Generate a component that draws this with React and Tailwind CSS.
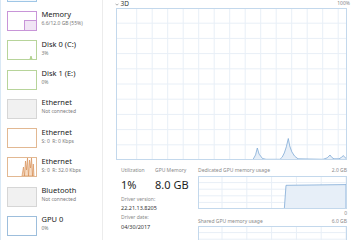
import React from "react";

const items = [
  { title: "", sub: "", kind: "cpu" },
  { title: "Memory", sub: "6.6/12.0 GB (55%)", kind: "mem" },
  { title: "Disk 0 (C:)", sub: "3%", kind: "disk0" },
  { title: "Disk 1 (E:)", sub: "0%", kind: "disk1" },
  { title: "Ethernet", sub: "Not connected", kind: "off" },
  { title: "Ethernet", sub: "S: 0  R: 0 Kbps", kind: "eth" },
  { title: "Ethernet", sub: "S: 0  R: 32.0 Kbps", kind: "eth2" },
  { title: "Bluetooth", sub: "Not connected", kind: "off" },
  { title: "GPU 0", sub: "0%", kind: "gpu" },
];

function Thumb({ kind }) {
  if (kind === "cpu")
    return <div className="w-[30px] h-[20px] border border-[#9fc6e6] bg-[#f4f9fd]" />;
  if (kind === "mem")
    return (
      <div className="w-[30px] h-[20px] border border-[#c895d8] bg-white">
        <svg width="28" height="18" className="block">
          <rect x="16.5" y="8.5" width="12" height="10" fill="#f1e5f5" stroke="#c895d8" strokeWidth="1" />
        </svg>
      </div>
    );
  if (kind === "disk0" || kind === "disk1")
    return (
      <div className="w-[30px] h-[20px] border border-[#b7d49a] bg-white">
        {kind === "disk0" && (
          <svg width="28" height="18" className="block">
            <path d="M22,18 L23,15 L24,18 Z" fill="#dcebc9" stroke="#9cc46f" strokeWidth="0.7" />
          </svg>
        )}
      </div>
    );
  if (kind === "off")
    return <div className="w-[30px] h-[20px] border border-[#d6d6d6] bg-[#f1f1f1]" />;
  if (kind === "eth")
    return <div className="w-[30px] h-[20px] border border-[#e2b892] bg-white" />;
  if (kind === "eth2")
    return (
      <div className="w-[30px] h-[20px] border border-[#e2b892] bg-white">
        <svg width="28" height="18" className="block">
          <path
            d="M14,18 L15.5,9 L16.5,18 L17.5,3 L18.5,12 L19.5,0 L20.5,18 L21.5,2 L22.5,10 L23.5,0 L24.5,18 L25.3,6 L26,18 Z"
            fill="#f6dcc4"
            stroke="#d8925a"
            strokeWidth="0.7"
          />
        </svg>
      </div>
    );
  return <div className="w-[30px] h-[20px] border border-[#9dbedc] bg-white" />;
}

function MainChart() {
  const vx = [];
  for (let x = 20.7; x < 231; x += 15.5) vx.push(x);
  const hy = [];
  for (let y = 15.2; y < 152; y += 15.2) hy.push(y);
  return (
    <svg width="231" height="152" className="block">
      {vx.map((x, i) => (
        <line key={"v" + i} x1={x} y1="0" x2={x} y2="152" stroke="#e8eff7" strokeWidth="1" />
      ))}
      {hy.map((y, i) => (
        <line key={"h" + i} x1="0" y1={y} x2="231" y2={y} stroke="#e8eff7" strokeWidth="1" />
      ))}
      <path
        d="M137,151.5 Q140,148 141.3,140 Q142.3,147 146.5,150.5 L150,151.3 L164,151.3 Q168.5,149 172.3,130.5 Q174.5,147 182,150.8 L207,151.3 Q212,150.5 214,147 Q216,150.3 218,150.8 L223,150.8 Q226,149.5 227.3,147.5 Q229,150 231,151 L231,152 L137,152 Z"
        fill="#e7eff8"
        stroke="#7fa9d6"
        strokeWidth="0.8"
      />
      <rect x="0.5" y="0.5" width="230" height="151" fill="none" stroke="#c3d8ec" strokeWidth="1" />
    </svg>
  );
}

function SmallChart({ step, h }) {
  const vx = [];
  for (let x = 24; x < 149; x += 24.8) vx.push(x);
  const hy = [];
  for (let y = 6.6; y < h; y += 6.6) hy.push(y);
  return (
    <svg width="149" height={h} className="block">
      {vx.map((x, i) => (
        <line key={"v" + i} x1={x} y1="0" x2={x} y2={h} stroke="#e8eff7" strokeWidth="1" />
      ))}
      {hy.map((y, i) => (
        <line key={"h" + i} x1="0" y1={y} x2="149" y2={y} stroke="#e8eff7" strokeWidth="1" />
      ))}
      {step && (
        <path
          d="M86.3,33 L88,9.3 L148,8.6 L148,33 Z"
          fill="#e7eff8"
          stroke="#7fa9d6"
          strokeWidth="0.8"
        />
      )}
      <rect x="0.5" y="0.5" width="148" height={h - 1} fill="none" stroke="#c3d8ec" strokeWidth="1" />
    </svg>
  );
}

export default function App() {
  return (
    <div className="w-[360px] h-[240px] overflow-hidden bg-white flex font-['Noto_Sans',sans-serif] border-l border-[#d9e8f5]">
      <div className="w-[102px] h-full border-r border-[#ececec] shrink-0 overflow-hidden">
        <div className="mt-[-22.95px]">
          {items.map((it, i) => (
            <div key={i} className="h-[29.3px] pt-[4.65px] pl-[6px] flex items-start">
              <Thumb kind={it.kind} />
              {it.title && (
                <div className="ml-[4.5px] mt-[-1.6px] flex flex-col">
                  <div className="text-[7.5px] leading-[10px] text-[#222] whitespace-nowrap">{it.title}</div>
                  <div className="mt-[1px] text-[5px] leading-[7px] text-[#7a7a7a] whitespace-pre">{it.sub}</div>
                </div>
              )}
            </div>
          ))}
        </div>
      </div>
      <div className="flex-1 flex flex-col pl-[13px] pr-[13px] min-w-0">
        <div className="h-[12px] flex items-center justify-between">
          <div className="flex items-center ml-[-1.5px]">
            <svg width="4" height="3" className="block mr-[2px]">
              <path d="M0.5,0.7 L2,2.2 L3.5,0.7" fill="none" stroke="#888" strokeWidth="0.7" />
            </svg>
            <span className="text-[6.5px] leading-[8px] text-[#333]">3D</span>
          </div>
          <span className="text-[5px] leading-[7px] text-[#888] mr-[-3px] mt-[-1px]">100%</span>
        </div>
        <div className="h-[152px]">
          <MainChart />
        </div>
        <div className="flex">
          <div className="w-[82px] pl-[5px] pt-[7px] flex flex-col">
            <div className="flex">
              <div className="w-[34px] flex flex-col">
                <div className="text-[5px] leading-[7px] text-[#8a8a8a]">Utilization</div>
                <div className="mt-[4px] text-[11px] leading-[13px] text-[#1e1e1e]">1%</div>
              </div>
              <div className="flex flex-col">
                <div className="text-[5px] leading-[7px] text-[#8a8a8a] whitespace-nowrap">GPU Memory</div>
                <div className="mt-[4px] text-[11px] leading-[13px] text-[#1e1e1e] whitespace-nowrap">8.0 GB</div>
              </div>
            </div>
            <div className="mt-[5px] text-[5px] leading-[7px] text-[#8a8a8a]">Driver version:</div>
            <div className="mt-[0.5px] text-[5.5px] leading-[8px] text-[#333]">22.21.13.8205</div>
            <div className="mt-[2px] text-[5px] leading-[7px] text-[#8a8a8a]">Driver date:</div>
            <div className="mt-[2.5px] text-[5.5px] leading-[8px] text-[#333]">04/30/2017</div>
          </div>
          <div className="w-[149px] pt-[7px] flex flex-col">
            <div className="flex justify-between text-[5px] leading-[7px] text-[#8a8a8a]">
              <span>Dedicated GPU memory usage</span>
              <span>2.0 GB</span>
            </div>
            <div className="mt-[2px] h-[33px]">
              <SmallChart step h={33} />
            </div>
            <div className="text-right text-[5px] leading-[7px] text-[#8a8a8a] mt-[1px]">0</div>
            <div className="flex justify-between text-[5px] leading-[7px] text-[#8a8a8a] mt-[1px]">
              <span>Shared GPU memory usage</span>
              <span>6.0 GB</span>
            </div>
            <div className="mt-[1px] h-[33px]">
              <SmallChart h={33} />
            </div>
          </div>
        </div>
      </div>
    </div>
  );
}
